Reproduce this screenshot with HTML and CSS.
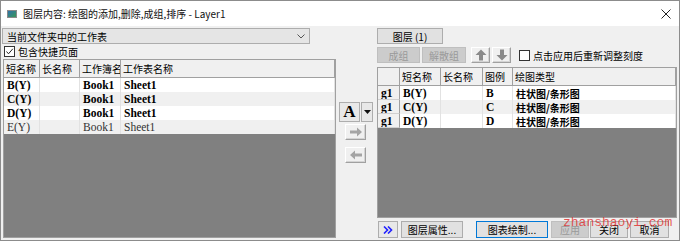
FILE: index.html
```html
<!DOCTYPE html>
<html lang="zh-CN">
<head>
<meta charset="UTF-8">
<title>图层内容</title>
<link rel="stylesheet" href="styles.css">
</head>
<body>
<div class="window">
  <div class="titlebar">
    <svg class="app-icon" width="10" height="8" viewBox="0 0 10 8">
      <defs>
        <linearGradient id="ig" x1="0" y1="0" x2="1" y2="1">
          <stop offset="0" stop-color="#2f6fb0"/>
          <stop offset="1" stop-color="#3a9a52"/>
        </linearGradient>
      </defs>
      <rect x="0.5" y="0.5" width="9" height="7" fill="url(#ig)" stroke="#8a8a8a"/>
    </svg>
    <span class="title">图层内容: 绘图的添加,删除,成组,排序 - Layer1</span>
    <svg class="close" width="10" height="10" viewBox="0 0 10 10">
      <path d="M0.5 0.5 L9.5 9.5 M9.5 0.5 L0.5 9.5" stroke="#222" stroke-width="1"/>
    </svg>
  </div>

  <div class="body">
    <div class="left">
      <div class="select">
        <span>当前文件夹中的工作表</span>
        <svg width="8" height="5" viewBox="0 0 8 5"><path d="M0.5 0.5 L4 4 L7.5 0.5" fill="none" stroke="#555"/></svg>
      </div>
      <div class="check">
        <span class="box">
          <svg width="9" height="9" viewBox="0 0 9 9"><path d="M1.5 4.5 L3.5 6.8 L7.8 1.8" fill="none" stroke="#222" stroke-width="1"/></svg>
        </span>
        包含快捷页面
      </div>
      <div class="grid">
        <div class="row row-left head">
          <div>短名称</div><div>长名称</div><div>工作簿名</div><div>工作表名称</div>
        </div>
        <div class="row row-left data bold">
          <div>B(Y)</div><div></div><div>Book1</div><div>Sheet1</div>
        </div>
        <div class="row row-left data bold alt">
          <div>C(Y)</div><div></div><div>Book1</div><div>Sheet1</div>
        </div>
        <div class="row row-left data bold">
          <div>D(Y)</div><div></div><div>Book1</div><div>Sheet1</div>
        </div>
        <div class="row row-left data alt">
          <div>E(Y)</div><div></div><div>Book1</div><div>Sheet1</div>
        </div>
        <div class="grid-empty"></div>
      </div>
    </div>

    <div class="middle">
      <div class="font-group">
        <div class="font-btn">A</div>
        <div class="font-drop">
          <svg width="7" height="4" viewBox="0 0 7 4"><path d="M0 0 H7 L3.5 4 Z" fill="#111"/></svg>
        </div>
      </div>
      <div class="icon-btn move-btn">
        <svg width="14" height="10" viewBox="0 0 14 10"><path d="M1 3.5 H8 V0.5 L13 5 L8 9.5 V6.5 H1 Z" fill="#a4a4a4"/></svg>
      </div>
      <div class="icon-btn move-btn gap">
        <svg width="14" height="10" viewBox="0 0 14 10"><path d="M13 3.5 H6 V0.5 L1 5 L6 9.5 V6.5 H13 Z" fill="#a4a4a4"/></svg>
      </div>
    </div>

    <div class="right">
      <div class="btn layer-tab">图层 (1)</div>
      <div class="toolbar">
        <div class="btn disabled group-btn">成组</div>
        <div class="btn disabled ungroup-btn">解散组</div>
        <div class="icon-btn updown up">
          <svg width="12" height="12" viewBox="0 0 12 12"><path d="M6 0.5 L11.5 6 H8 V11.5 H4 V6 H0.5 Z" fill="#8a8a8a"/></svg>
        </div>
        <div class="icon-btn updown">
          <svg width="12" height="12" viewBox="0 0 12 12"><path d="M6 11.5 L11.5 6 H8 V0.5 H4 V6 H0.5 Z" fill="#8a8a8a"/></svg>
        </div>
        <div class="check rescale">
          <span class="box"></span>
          点击应用后重新调整刻度
        </div>
      </div>
      <div class="grid">
        <div class="row row-right head">
          <div></div><div>短名称</div><div>长名称</div><div>图例</div><div>绘图类型</div>
        </div>
        <div class="row row-right data bold">
          <div class="rowhead">g1</div><div>B(Y)</div><div></div><div>B</div><div class="cjk-bold">柱状图/条形图</div>
        </div>
        <div class="row row-right data bold alt">
          <div class="rowhead">g1</div><div>C(Y)</div><div></div><div>C</div><div class="cjk-bold">柱状图/条形图</div>
        </div>
        <div class="row row-right data bold">
          <div class="rowhead">g1</div><div>D(Y)</div><div></div><div>D</div><div class="cjk-bold">柱状图/条形图</div>
        </div>
        <div class="grid-empty"></div>
      </div>
      <div class="footer">
        <div class="btn more-btn">
          <svg width="10" height="8" viewBox="0 0 10 8"><path d="M1 0.5 L4.5 4 L1 7.5 M5 0.5 L8.5 4 L5 7.5" fill="none" stroke="#1f1fff" stroke-width="1.6"/></svg>
        </div>
        <div class="btn layer-props">图层属性...</div>
        <div class="btn focus plot-btn">图表绘制...</div>
        <div class="btn disabled apply-btn">应用</div>
        <div class="btn close-btn">关闭</div>
        <div class="btn cancel-btn">取消</div>
      </div>
    </div>
  </div>

  <div class="watermark">zhanshaoyi.com</div>
</div>
</body>
</html>
```

FILE: styles.css
```css
body {
  margin: 0;
  font-family: "Noto Sans CJK SC", "Liberation Sans", sans-serif;
  font-size: 10px;
  color: #000;
}
.window {
  position: relative;
  width: 680px;
  height: 241px;
  box-sizing: border-box;
  border: 1px solid #8c8c8c;
  background: #f0f0f0;
  display: flex;
  flex-direction: column;
}
.titlebar {
  height: 25px;
  flex-shrink: 0;
  background: #fff;
  display: flex;
  align-items: center;
  padding: 0 8px 0 6px;
}
.app-icon {
  margin-right: 6px;
}
.title {
  flex: 1;
  color: #111;
}
.body {
  flex: 1;
  display: flex;
  padding: 2px 2px 2px 1px;
  min-height: 0;
}
.left {
  width: 334px;
  display: flex;
  flex-direction: column;
}
.select {
  width: 308px;
  height: 16px;
  box-sizing: border-box;
  border: 1px solid #adadad;
  background: #e5e5e5;
  display: flex;
  align-items: center;
  justify-content: space-between;
  padding: 0 4px 0 4px;
}
.check {
  display: flex;
  align-items: center;
  height: 11px;
  margin-top: 2px;
  margin-left: 2px;
}
.box {
  width: 9px;
  height: 9px;
  border: 1px solid #333;
  background: #fff;
  margin-right: 3px;
  display: flex;
}
.grid {
  flex: 1;
  margin-top: 2px;
  margin-left: 1px;
  border: 1px solid #a0a0a0;
  display: flex;
  flex-direction: column;
  background: #fff;
}
.row {
  display: grid;
}
.row-left {
  grid-template-columns: 36px 40px 41px 1fr;
}
.row-right {
  grid-template-columns: 22px 41px 42px 30px 1fr;
}
.row > div {
  overflow: hidden;
  white-space: nowrap;
  padding-left: 3px;
  display: flex;
  align-items: center;
}
.head {
  height: 18px;
}
.head > div {
  background: #f0f0f0;
  border-right: 1px solid #a0a0a0;
  border-bottom: 1px solid #a0a0a0;
  padding-left: 2px;
}
.data {
  height: 14px;
  background: #fff;
}
.data.alt {
  background: #f0f0f0;
}
.data > div {
  border-right: 1px solid #e2e2e2;
  font-family: "Liberation Serif", serif;
  font-size: 11.5px;
  color: #333;
}
.data.bold > div {
  font-weight: bold;
  color: #000;
}
.data > .cjk-bold {
  font-family: "Noto Sans CJK SC", sans-serif;
  font-size: 10px;
}
.data > .rowhead {
  background: #f0f0f0;
  border-right: 1px solid #a0a0a0;
  border-bottom: 1px solid #d0d0d0;
}
.grid-empty {
  flex: 1;
  background: #808080;
}
.middle {
  width: 41px;
  display: flex;
  flex-direction: column;
  padding-top: 74px;
}
.font-group {
  display: flex;
  margin-left: 3px;
  height: 20px;
}
.font-btn {
  width: 21px;
  box-sizing: border-box;
  border: 1px solid #adadad;
  background: #e8e8e8;
  font-family: "Liberation Serif", serif;
  font-weight: bold;
  font-size: 17px;
  display: flex;
  align-items: center;
  justify-content: center;
}
.font-drop {
  width: 12px;
  margin-left: 1px;
  box-sizing: border-box;
  border: 1px solid #adadad;
  background: #e8e8e8;
  display: flex;
  align-items: center;
  justify-content: center;
}
.icon-btn {
  box-sizing: border-box;
  background: #f0f0f0;
  border: 1px solid;
  border-color: #fff #a0a0a0 #a0a0a0 #fff;
  box-shadow: inset -1px -1px #d4d4d4;
  display: flex;
  align-items: center;
  justify-content: center;
}
.move-btn {
  width: 21px;
  height: 16px;
  margin: 2px 0 0 9px;
}
.move-btn.gap {
  margin-top: 7px;
}
.right {
  width: 300px;
  display: flex;
  flex-direction: column;
}
.btn {
  box-sizing: border-box;
  border: 1px solid #adadad;
  background: #e1e1e1;
  display: flex;
  align-items: center;
  justify-content: center;
  white-space: nowrap;
}
.btn.disabled {
  background: #cccccc;
  border-color: #bfbfbf;
  color: #9a9a9a;
}
.btn.focus {
  border-color: #0078d7;
}
.layer-tab {
  width: 66px;
  height: 16px;
}
.toolbar {
  display: flex;
  align-items: center;
  height: 16px;
  margin-top: 3px;
}
.toolbar > div {
  height: 16px;
}
.group-btn {
  width: 43px;
}
.ungroup-btn {
  width: 44px;
  margin-left: 2px;
}
.updown {
  width: 19px;
}
.updown.up {
  margin-left: 5px;
  margin-right: 2px;
}
.check.rescale {
  margin: 0 0 0 8px;
  height: 16px;
}
.right .grid {
  margin-top: 4px;
  margin-left: 0;
}
.footer {
  display: flex;
  height: 17px;
  margin-top: 3px;
}
.more-btn {
  width: 20px;
  margin-left: 1px;
  background: #e8e8e8;
}
.layer-props {
  width: 62px;
  margin-left: 3px;
}
.plot-btn {
  width: 72px;
  margin-left: 13px;
}
.apply-btn {
  width: 38px;
  margin-left: 3px;
}
.close-btn {
  width: 38px;
  margin-left: 1px;
}
.cancel-btn {
  width: 39px;
  margin-left: 2px;
}
.watermark {
  position: absolute;
  left: 562px;
  top: 214px;
  font-family: "Liberation Mono", monospace;
  font-size: 13px;
  color: rgba(225, 30, 30, 0.75);
  pointer-events: none;
}
```
